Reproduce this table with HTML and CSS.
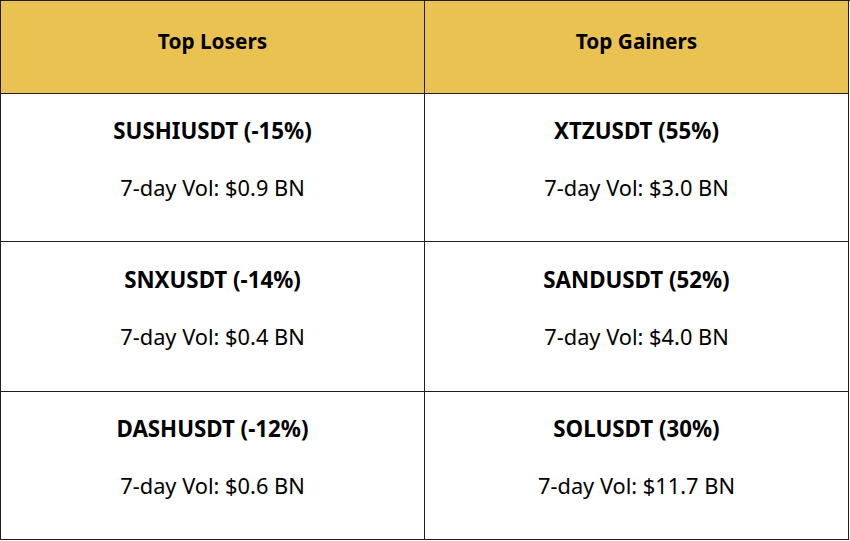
FILE: index.html
```html
<!DOCTYPE html>
<html>
<head>
<meta charset="utf-8">
<link rel="stylesheet" href="styles.css">
</head>
<body>
<div class="table">
  <div class="cell head"><span>Top Losers</span></div>
  <div class="cell head"><span>Top Gainers</span></div>
  <div class="cell"><div class="pair">SUSHIUSDT (-15%)</div><div class="vol">7-day Vol: $0.9 BN</div></div>
  <div class="cell"><div class="pair">XTZUSDT (55%)</div><div class="vol">7-day Vol: $3.0 BN</div></div>
  <div class="cell"><div class="pair">SNXUSDT (-14%)</div><div class="vol">7-day Vol: $0.4 BN</div></div>
  <div class="cell"><div class="pair">SANDUSDT (52%)</div><div class="vol">7-day Vol: $4.0 BN</div></div>
  <div class="cell"><div class="pair">DASHUSDT (-12%)</div><div class="vol">7-day Vol: $0.6 BN</div></div>
  <div class="cell"><div class="pair">SOLUSDT (30%)</div><div class="vol">7-day Vol: $11.7 BN</div></div>
</div>
</body>
</html>
```
FILE: styles.css
```css
html, body { margin: 0; padding: 0; background: #ffffff; }
body { font-family: "Noto Sans", "Liberation Sans", sans-serif; color: #000; }
.table {
  display: grid;
  grid-template-columns: 424px 424px;
  grid-template-rows: 93px 148px 150px 148px;
  width: 849px;
  border-left: 1px solid #1e1e1e;
  border-top: 1px solid #1e1e1e;
}
.cell {
  box-sizing: border-box;
  border-right: 1px solid #1e1e1e;
  border-bottom: 1px solid #1e1e1e;
  display: flex;
  flex-direction: column;
  align-items: center;
  justify-content: center;
  padding-bottom: 17px;
  line-height: 28px;
}
.head {
  background: #eac251;
  font-weight: 700;
  font-size: 20.8px;
  padding-bottom: 12px;
}
.pair { font-weight: 700; font-size: 22.3px; margin-bottom: 29px; }
.vol { font-weight: 400; font-size: 21.8px; }
```
